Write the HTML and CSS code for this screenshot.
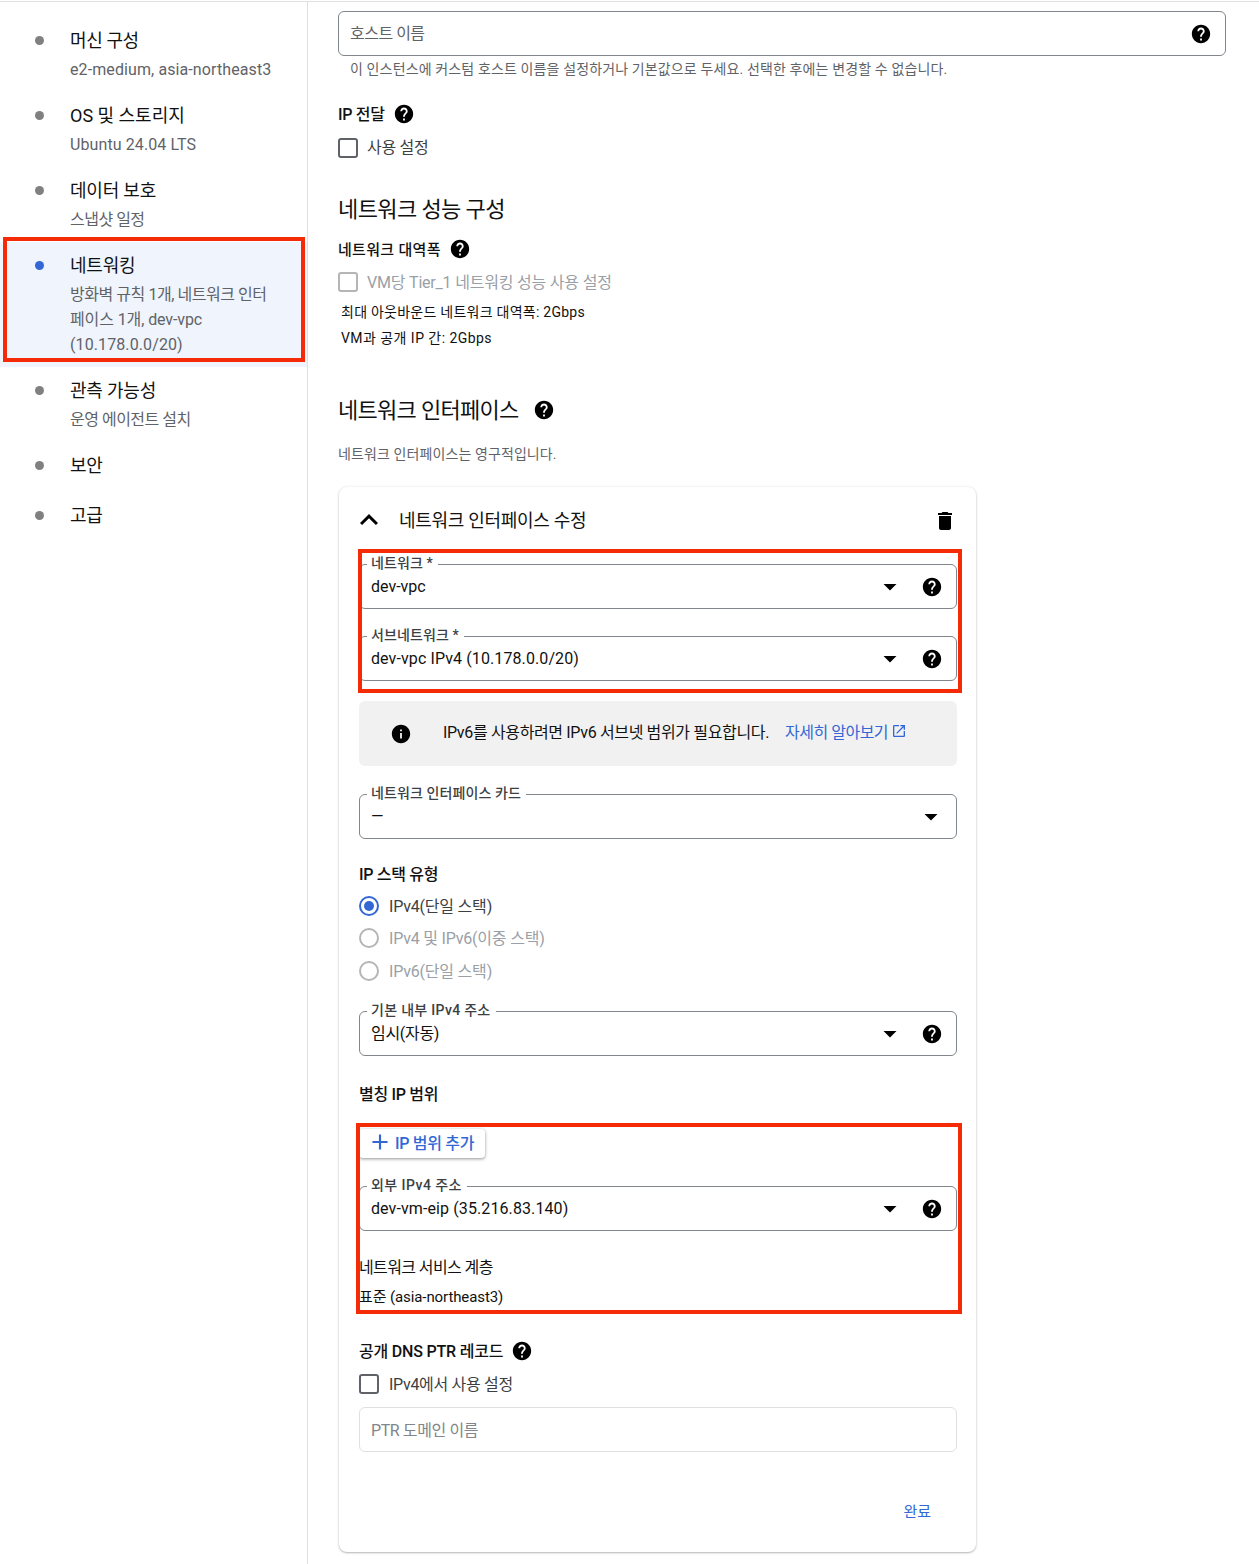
FILE: index.html
```html
<!DOCTYPE html>
<html lang="ko">
<head>
<meta charset="utf-8">
<title>네트워킹</title>
<link rel="stylesheet" href="styles.css">
</head>
<body>
<svg class="defs" width="0" height="0" aria-hidden="true">
  <symbol id="help" viewBox="0 0 24 24"><path d="M12 2C6.48 2 2 6.48 2 12s4.48 10 10 10 10-4.48 10-10S17.52 2 12 2zm1 17h-2v-2h2v2zm2.07-7.75l-.9.92C13.45 12.9 13 13.5 13 15h-2v-.5c0-1.1.45-2.1 1.17-2.83l1.24-1.26c.37-.36.59-.86.59-1.41 0-1.1-.9-2-2-2s-2 .9-2 2H8c0-2.21 1.79-4 4-4s4 1.79 4 4c0 .88-.36 1.68-.93 2.25z"/></symbol>
  <symbol id="drop" viewBox="0 0 24 24"><path d="M5.5 9h13L12 15.5z"/></symbol>
</svg>
<div class="page">
  <nav class="side">
    <div class="step"><span class="dot"></span><div><div class="step-title sp-m4">머신 구성</div><div class="step-sub sp-p1">e2-medium, asia-northeast3</div></div></div>
    <div class="step"><span class="dot"></span><div><div class="step-title">OS 및 스토리지</div><div class="step-sub sp-p1">Ubuntu 24.04 LTS</div></div></div>
    <div class="step"><span class="dot"></span><div><div class="step-title sp-m2">데이터 보호</div><div class="step-sub sp-m5">스냅샷 일정</div></div></div>
    <div class="step step-active"><span class="dot dot-active"></span><div><div class="step-title sp-m2">네트워킹</div><div class="step-sub"><span class="sp-m45">방화벽 규칙 1개, 네트워크 인터</span><br><span class="sp-m1">페이스 1개, dev-vpc</span><br><span class="sp-p1">(10.178.0.0/20)</span></div></div><div class="mark mark-side"></div></div>
    <div class="step"><span class="dot"></span><div><div class="step-title sp-m2">관측 가능성</div><div class="step-sub sp-m5">운영 에이전트 설치</div></div></div>
    <div class="step step-short"><span class="dot"></span><div><div class="step-title sp-m2">보안</div></div></div>
    <div class="step step-short"><span class="dot"></span><div><div class="step-title sp-m2">고급</div></div></div>
  </nav>
  <main class="main">
    <div class="field field-host">
      <span class="value placeholder lift-2 sp-m5">호스트 이름</span>
      <svg class="help"><use href="#help"/></svg>
    </div>
    <p class="hint">이 인스턴스에 커스텀 호스트 이름을 설정하거나 기본값으로 두세요. 선택한 후에는 변경할 수 없습니다.</p>

    <div class="label-row lr-forward"><span class="lift sp-m3">IP 전달</span> <svg class="help"><use href="#help"/></svg></div>
    <label class="check-row cr-forward"><span class="box"></span><span class="lift-2 sp-m3">사용 설정</span></label>

    <h2 class="heading h-perf"><span class="sp-m6">네트워크 성능 구성</span></h2>
    <div class="label-row lr-band"><span class="lift sp-p3">네트워크 대역폭</span> <svg class="help"><use href="#help"/></svg></div>
    <label class="check-row cr-tier disabled"><span class="box"></span><span class="lift sp-m2">VM당 Tier_1 네트워킹 성능 사용 설정</span></label>
    <p class="stat stat-first sp-p2">최대 아웃바운드 네트워크 대역폭: 2Gbps</p>
    <p class="stat sp-p4">VM과 공개 IP 간: 2Gbps</p>

    <h2 class="heading h-nic"><span class="sp-m7">네트워크 인터페이스</span> <svg class="help"><use href="#help"/></svg></h2>
    <p class="note">네트워크 인터페이스는 영구적입니다.</p>

    <section class="card">
      <header class="card-head">
        <svg class="chev" viewBox="0 0 24 24"><path d="M12 8l-6 6 1.41 1.41L12 10.83l4.59 4.58L18 14z"/></svg>
        <span class="card-title lift sp-m3">네트워크 인터페이스 수정</span>
        <svg class="trash" viewBox="0 0 24 24"><path d="M6 19c0 1.1.9 2 2 2h8c1.1 0 2-.9 2-2V7H6v12zM19 4h-3.5l-1-1h-5l-1 1H5v2h14V4z"/></svg>
      </header>

      <div class="group group-net">
        <div class="field"><span class="float sp-p1">네트워크 *</span><span class="value">dev-vpc</span><svg class="drop"><use href="#drop"/></svg><svg class="help"><use href="#help"/></svg></div>
        <div class="field field-next"><span class="float sp-p1">서브네트워크 *</span><span class="value sp-p1">dev-vpc IPv4 (10.178.0.0/20)</span><svg class="drop"><use href="#drop"/></svg><svg class="help"><use href="#help"/></svg></div>
        <div class="mark mark-net"></div>
      </div>

      <div class="info">
        <svg class="info-icon" viewBox="0 0 24 24"><path d="M12 2C6.48 2 2 6.48 2 12s4.48 10 10 10 10-4.48 10-10S17.52 2 12 2zm1 15h-2v-6h2v6zm0-8h-2V7h2v2z"/></svg>
        <span class="info-text sp-m35">IPv6를 사용하려면 IPv6 서브넷 범위가 필요합니다.</span>
        <a class="link"><span class="sp-m5">자세히 알아보기</span><svg class="ext" viewBox="0 0 24 24"><path d="M19 19H5V5h7V3H5c-1.11 0-2 .9-2 2v14c0 1.1.89 2 2 2h14c1.1 0 2-.9 2-2v-7h-2v7zM14 3v2h3.59l-9.83 9.83 1.41 1.41L19 6.41V10h2V3h-7z"/></svg></a>
      </div>

      <div class="field field-nic"><span class="float sp-p1">네트워크 인터페이스 카드</span><span class="value">—</span><svg class="drop"><use href="#drop"/></svg></div>

      <div class="label-row lr-stack"><span class="sp-m3">IP 스택 유형</span></div>
      <label class="radio-row rr-1"><span class="radio radio-on"></span><span class="lift sp-m2">IPv4(단일 스택)</span></label>
      <label class="radio-row rr-2 disabled"><span class="radio"></span><span class="lift sp-m2">IPv4 및 IPv6(이중 스택)</span></label>
      <label class="radio-row rr-3 disabled"><span class="radio"></span><span class="lift sp-m2">IPv6(단일 스택)</span></label>

      <div class="field field-addr"><span class="float sp-p3">기본 내부 IPv4 주소</span><span class="value lift-2 sp-m3">임시(자동)</span><svg class="drop"><use href="#drop"/></svg><svg class="help"><use href="#help"/></svg></div>

      <div class="label-row lr-alias"><span class="sp-m3">별칭 IP 범위</span></div>

      <div class="group group-ext">
        <button class="add" type="button"><svg class="plus" viewBox="0 0 24 24"><path d="M19 13h-6v6h-2v-6H5v-2h6V5h2v6h6v2z"/></svg><span class="lift-2 sp-m3">IP 범위 추가</span></button>
        <div class="field field-next"><span class="float sp-p4">외부 IPv4 주소</span><span class="value sp-p1">dev-vm-eip (35.216.83.140)</span><svg class="drop"><use href="#drop"/></svg><svg class="help"><use href="#help"/></svg></div>
        <div class="plain plain-tier sp-m6">네트워크 서비스 계층</div>
        <div class="plain plain-val sp-m1">표준 (asia-northeast3)</div>
        <div class="mark mark-ext"></div>
      </div>

      <div class="label-row lr-dns"><span class="lift sp-m2">공개 DNS PTR 레코드</span> <svg class="help"><use href="#help"/></svg></div>
      <label class="radio-row cr-dns"><span class="box"></span><span class="lift sp-m3">IPv4에서 사용 설정</span></label>
      <div class="field field-off"><span class="value lift sp-m4">PTR 도메인 이름</span></div>
      <div class="done-row"><a class="done">완료</a></div>
    </section>
  </main>
</div>
</body>
</html>
```

FILE: styles.css
```css
* { box-sizing: border-box; }
html, body { margin: 0; padding: 0; background: #fff; }
body {
  width: 1259px;
  height: 1564px;
  overflow: hidden;
  color: #111;
  font-family: Roboto, "Noto Sans CJK KR", sans-serif;
  font-size: 16px;
}
p, h2 { margin: 0; font-weight: 400; }
.defs { position: absolute; }

/* fine tracking: the CJK and Latin faces differ in width from the original */
.sp-m7 { letter-spacing: -.7px; }
.sp-m6 { letter-spacing: -.6px; }
.sp-m5 { letter-spacing: -.5px; }
.sp-m45 { letter-spacing: -.45px; }
.sp-m4 { letter-spacing: -.4px; }
.sp-m35 { letter-spacing: -.35px; }
.sp-m3 { letter-spacing: -.3px; }
.sp-m2 { letter-spacing: -.2px; }
.sp-m1 { letter-spacing: -.1px; }
.sp-p1 { letter-spacing: .1px; }
.sp-p2 { letter-spacing: .25px; }
.sp-p3 { letter-spacing: .3px; }
.sp-p4 { letter-spacing: .45px; }

.lift { margin-bottom: 2px; }
.lift-2 { margin-bottom: 4px; }

.page {
  display: flex;
  height: 1563px;
  margin-top: 1px;
  border-top: 1px solid #e0e0e0;
}

/* sidebar */
.side {
  width: 308px;
  flex: none;
  padding-top: 15px;
  border-right: 1px solid #e0e0e0;
}
.step {
  position: relative;
  display: flex;
  padding: 11px 20px 10px 35px;
}
.step-short { padding-bottom: 14px; }
.step-active { background: #eff4fd; }
.dot {
  flex: none;
  width: 9px;
  height: 9px;
  margin: 8px 26px 0 0;
  border-radius: 50%;
  background: #808080;
}
.dot-active { background: #3367d6; }
.step-title { font-size: 18px; line-height: 25px; color: #111; }
.step-sub { margin-top: 4px; font-size: 16px; line-height: 25px; color: #5f6368; }

/* red annotation frames */
.mark {
  position: absolute;
  border: 4px solid #f52a06;
  pointer-events: none;
}
.mark-side { top: -5px; bottom: 5px; left: 3px; right: 2px; }
.mark-net { top: -15px; bottom: -12px; left: -1px; right: -5px; }
.mark-ext { top: -6px; bottom: -5px; left: -3px; right: -5px; }

/* main column */
.main { flex: 1; padding: 9px 33px 0 30px; }

.field {
  position: relative;
  display: flex;
  align-items: center;
  height: 45px;
  padding: 0 13px 0 11px;
  border: 1px solid #80868b;
  border-radius: 6px;
  background: #fff;
}
.field-next { margin-top: 27px; }
.field-nic { margin-top: 28px; }
.field-addr { margin-top: 28px; }
.field-host { height: 45px; padding-left: 11px; }
.value { flex: 1; font-size: 16px; color: #111; }
.placeholder { color: #5f6368; }
.float {
  position: absolute;
  top: -12px;
  left: 7px;
  padding: 0 5px 0 4px;
  background: #fff;
  font-size: 14px;
  line-height: 20px;
  font-weight: 500;
  color: #3c4043;
}
.help { width: 22px; height: 22px; flex: none; fill: #000; vertical-align: middle; }
.drop { width: 24px; height: 24px; flex: none; margin-right: 19px; fill: #000; }
.field .drop:last-child { margin-right: 0; }

.hint { margin-top: 3px; padding-left: 12px; font-size: 14px; line-height: 20px; letter-spacing: .13px; color: #5f6368; }

.label-row {
  display: flex;
  align-items: center;
  gap: 8px;
  height: 24px;
  font-size: 16px;
  font-weight: 500;
  color: #111;
}
.lr-forward { margin-top: 23px; }
.lr-band { margin-top: 12px; font-size: 15px; }
.lr-stack { margin-top: 22px; }
.lr-alias { margin-top: 25px; }
.lr-dns { margin-top: 30px; }

.check-row, .radio-row {
  display: flex;
  align-items: center;
  height: 24px;
  font-size: 16px;
  color: #3c4043;
}
.cr-forward { margin-top: 10px; }
.cr-tier { margin-top: 9px; }
.cr-dns { margin-top: 9px; }
.box {
  flex: none;
  width: 20px;
  height: 20px;
  margin-right: 9px;
  border: 2px solid #5f6368;
  border-radius: 3px;
}
.cr-dns .box { margin-right: 10px; }
.disabled { color: #9aa0a6; }
.disabled .box, .disabled .radio { border-color: #b5b5b5; }

.heading {
  display: flex;
  align-items: center;
  gap: 14px;
  height: 32px;
  font-size: 22px;
  color: #111;
}
.heading span { margin-bottom: 4px; }
.h-perf { margin-top: 33px; }
.h-nic { margin-top: 43px; }
.stat { height: 26px; padding-left: 3px; font-size: 14px; line-height: 26px; color: #111; }
.stat-first { margin-top: 5px; }
.note { margin-top: 18px; font-size: 14px; line-height: 20px; letter-spacing: .1px; color: #5f6368; }

/* card */
.card {
  width: 637px;
  height: 1065px;
  margin: 23px 0 0 1px;
  padding: 11px 19px 0 20px;
  border-radius: 8px;
  background: #fff;
  box-shadow: 0 1px 2px rgba(60, 64, 67, .35), 0 0 3px rgba(60, 64, 67, .1);
}
.card-head { display: flex; align-items: center; height: 44px; }
.chev { width: 36px; height: 36px; margin-left: -8px; margin-right: 12px; fill: #000; }
.card-title { flex: 1; font-size: 18px; color: #111; }
.trash { width: 24px; height: 24px; margin-top: 2px; fill: #000; }

.group { position: relative; }
.group-net { margin-top: 22px; }
.group-ext { margin-top: 24px; }

.info {
  display: flex;
  align-items: center;
  height: 65px;
  margin-top: 20px;
  padding-left: 31px;
  border-radius: 6px;
  background: #f1f1f1;
  font-size: 16px;
  color: #111;
}
.info-icon { width: 22px; height: 22px; margin-right: 31px; fill: #000; }
.info-text { margin-bottom: 6px; }
.link { display: inline-flex; align-items: center; margin: 0 0 6px 16px; color: #3367d6; }
.ext { width: 16px; height: 16px; margin-left: 3px; fill: #3367d6; }

.radio-row { color: #3c4043; }
.rr-1 { margin-top: 9px; }
.rr-2 { margin-top: 8px; }
.rr-3 { margin-top: 9px; }
.rr-2, .rr-3 { color: #9aa0a6; }
.radio {
  flex: none;
  position: relative;
  width: 20px;
  height: 20px;
  margin-right: 10px;
  border: 2px solid #5f6368;
  border-radius: 50%;
}
.radio-on { border-color: #3367d6; }
.radio-on::after {
  content: "";
  position: absolute;
  top: 3px;
  left: 3px;
  width: 10px;
  height: 10px;
  border-radius: 50%;
  background: #3367d6;
}

.add {
  display: flex;
  align-items: center;
  width: 126px;
  height: 29px;
  padding: 0 0 0 8px;
  border: 0;
  border-radius: 4px;
  background: #fff;
  box-shadow: 0 1px 3px rgba(60, 64, 67, .45), 0 1px 4px rgba(60, 64, 67, .15);
  font: inherit;
  font-weight: 500;
  color: #3367d6;
}
.plus { width: 26px; height: 26px; margin: 0 2px 3px 0; fill: #3367d6; }
.group-ext .field { margin-top: 28px; }
.plain { height: 24px; line-height: 24px; color: #111; }
.plain-tier { margin-top: 25px; }
.plain-val { margin-top: 5px; font-size: 15px; }

.field-off { margin-top: 11px; border-color: #e0e0e0; }
.field-off .value { color: #80868b; }
.done-row { display: flex; justify-content: flex-end; margin-top: 44px; padding-right: 26px; }
.done { font-size: 15px; line-height: 32px; color: #3367d6; }
```
